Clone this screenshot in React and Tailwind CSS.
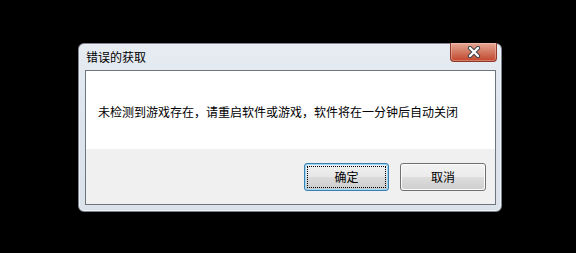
import React from "react";

const FONT = { fontFamily: '"Noto Sans CJK SC", "Noto Sans", sans-serif' };

function CloseX() {
  return (
    <svg width="14" height="12" viewBox="0 0 14 12">
      <path d="M3 2 L11 10 M11 2 L3 10" stroke="#3b3f47" strokeWidth="4.2" strokeLinecap="round" fill="none" />
      <path d="M3 2 L11 10 M11 2 L3 10" stroke="#ffffff" strokeWidth="2.4" strokeLinecap="round" fill="none" />
    </svg>
  );
}

function Btn({ label, primary }) {
  return (
    <div
      className={
        "h-[28px] rounded-[3px] border flex p-[1px] " +
        (primary ? "w-[85px] border-[#3c7fb1] bg-[#9fd6f4]" : "w-[86px] border-[#707070] bg-[#fbfbfb]")
      }
    >
      <div className="flex-1 flex flex-col rounded-[2px] overflow-hidden relative">
        <div className={"flex-1 " + (primary ? "bg-gradient-to-b from-[#f0f0f0] to-[#e6e6e6]" : "bg-gradient-to-b from-[#f2f2f2] to-[#ebebeb]")} />
        <div className={"flex-1 " + (primary ? "bg-gradient-to-b from-[#dbdbdb] to-[#cdcdcd]" : "bg-gradient-to-b from-[#dddddd] to-[#cfcfcf]")} />
        <div
          className={
            "absolute inset-0 flex items-center justify-center text-[12px] leading-[14px] text-black " +
            (primary ? "m-[1px] border border-dotted border-black" : "")
          }
          style={FONT}
        >
          {label}
        </div>
      </div>
    </div>
  );
}

export default function App() {
  return (
    <div className="w-[576px] h-[253px] bg-black pt-[43px] pl-[78px]" style={FONT}>
      <div className="w-[424px] h-[169px] rounded-[6px] border border-[#7d8590] bg-gradient-to-b from-[#e6ecf2] via-[#dce3eb] to-[#dbe2ea] flex flex-col shadow-[inset_0_0_0_1px_#eef2f6]">
        <div className="h-[26px] flex items-start justify-between pl-[7px] pr-[4px]">
          <div className="h-[26px] flex items-center text-[12px] leading-[14px] text-black">错误的获取</div>
          <div className="mt-[-1px] w-[47px] h-[19px] rounded-b-[4px] border border-t-0 border-[#8e3a2b] bg-gradient-to-b from-[#e8a897] via-[#d17760] to-[#c2442a] flex items-center justify-center shadow-[inset_0_0_0_1px_rgba(255,220,210,0.35)]">
            <CloseX />
          </div>
        </div>
        <div className="ml-[6px] mr-[5px] h-[135px] border border-[#6d7580] flex flex-col">
          <div className="h-[78px] bg-white pl-[12px] pt-[33px]">
            <div className="text-[12px] leading-[16px] text-black whitespace-nowrap">
              未检测到游戏存在，请重启软件或游戏，软件将在一分钟后自动关闭
            </div>
          </div>
          <div className="flex-1 bg-[#f0f0f0] flex justify-end items-start pt-[14px] pr-[9px] gap-[11px]">
            <Btn label="确定" primary />
            <Btn label="取消" />
          </div>
        </div>
      </div>
    </div>
  );
}
